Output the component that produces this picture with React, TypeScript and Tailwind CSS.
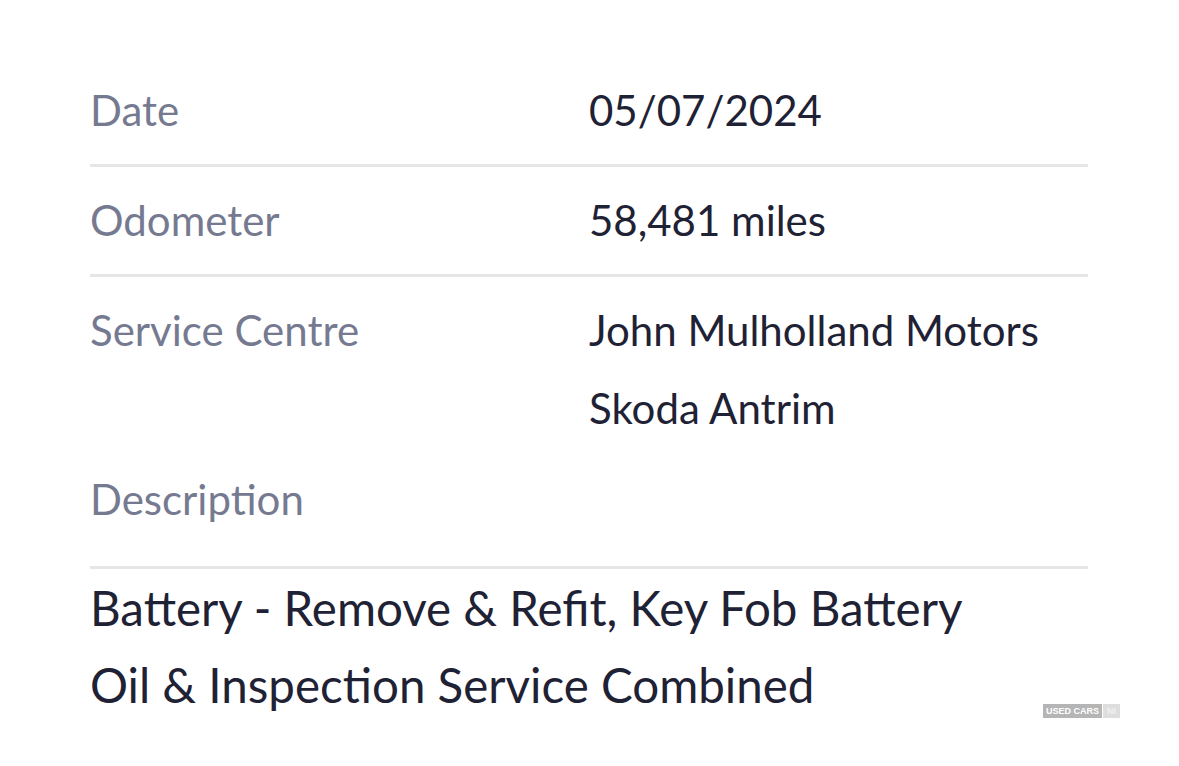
export default function App() {
  return (
    <div className="min-h-screen bg-white relative" style={{fontFamily: "Lato, 'Open Sans', sans-serif"}}>
      <div className="px-[90px] pt-[57px] w-[1178px] text-[42px] leading-[78px]">
        <div className="grid grid-cols-2 pt-[14px] pb-[15px] border-b-[3px] border-[#e6e6e9]">
          <div className="text-[#767a91]">Date</div>
          <div className="text-[#1f2235]">05/07/2024</div>
        </div>
        <div className="grid grid-cols-2 pt-[14px] pb-[15px] border-b-[3px] border-[#e6e6e9]">
          <div className="text-[#767a91]">Odometer</div>
          <div className="text-[#1f2235]">58,481 miles</div>
        </div>
        <div className="grid grid-cols-2 pt-[14px] pb-[8px]">
          <div className="text-[#767a91]">Service Centre</div>
          <div className="text-[#1f2235]">
            <div>John Mulholland Motors</div>
            <div>Skoda Antrim</div>
          </div>
        </div>
        <div className="pt-[5px] pb-[28px] border-b-[3px] border-[#e6e6e9] text-[#767a91]">Description</div>
        <div className="text-[47.5px] leading-[77px] text-[#1f2235]">
          <div>Battery - Remove &amp; Refit, Key Fob Battery</div>
          <div>Oil &amp; Inspection Service Combined</div>
        </div>
      </div>
      <div className="absolute left-[1043px] top-[704px] flex h-[14px] text-[9px] font-bold leading-[14px] text-white" style={{fontFamily: "'Liberation Sans', Arial, sans-serif"}}>
        <span className="bg-[#b5b5b5] w-[59px] text-center">USED CARS</span>
        <span className="bg-[#dedede] w-[17px] ml-px text-center text-[#f0f0f0]">NI</span>
      </div>
    </div>
  );
}
